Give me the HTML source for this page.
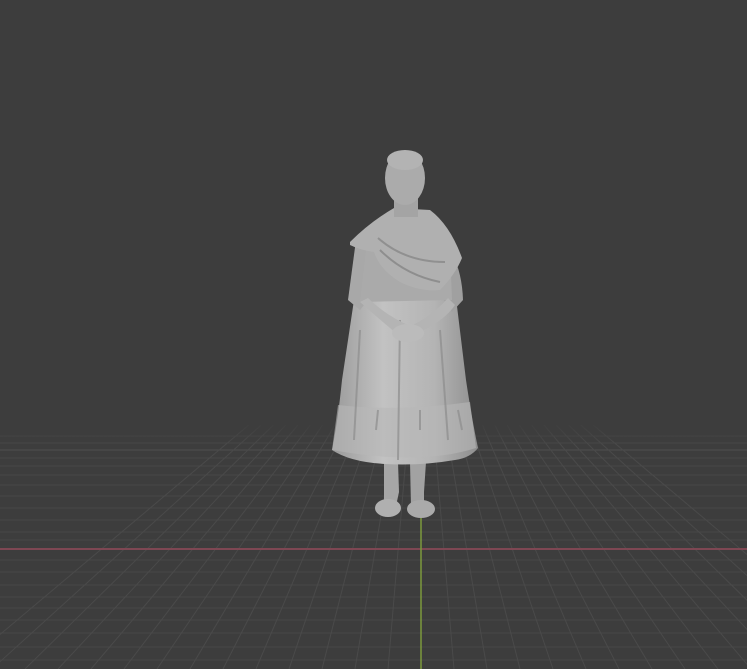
<!DOCTYPE html>
<html><head><meta charset="utf-8"><style>
html,body{margin:0;padding:0;background:#3d3d3d;width:747px;height:669px;overflow:hidden}
</style></head><body>
<svg width="747" height="669" viewBox="0 0 747 669" xmlns="http://www.w3.org/2000/svg">
<defs>
<linearGradient id="sk" x1="0" x2="1" y1="0" y2="0">
<stop offset="0" stop-color="#9a9a9a"/><stop offset="0.35" stop-color="#c2c2c2"/><stop offset="0.7" stop-color="#b4b4b4"/><stop offset="1" stop-color="#8e8e8e"/>
</linearGradient>
<linearGradient id="fade" x1="0" x2="0" y1="0" y2="1">
<stop offset="0" stop-color="#3d3d3d" stop-opacity="1"/><stop offset="1" stop-color="#3d3d3d" stop-opacity="0"/>
</linearGradient>
</defs>
<rect width="747" height="669" fill="#3d3d3d"/>
<g stroke="#484848" stroke-width="1" fill="none" id="grid">
<line x1="0" y1="450" x2="747" y2="450" stroke="#4f4f4f"/>
<line x1="0" y1="436" x2="747" y2="436"/>
<line x1="0" y1="443" x2="747" y2="443"/>
<line x1="0" y1="458" x2="747" y2="458"/>
<line x1="0" y1="466" x2="747" y2="466"/>
<line x1="0" y1="475" x2="747" y2="475"/>
<line x1="0" y1="485" x2="747" y2="485"/>
<line x1="0" y1="496" x2="747" y2="496"/>
<line x1="0" y1="508" x2="747" y2="508"/>
<line x1="0" y1="520" x2="747" y2="520"/>
<line x1="0" y1="532" x2="747" y2="532"/>
<line x1="0" y1="540" x2="747" y2="540"/>
<line x1="0" y1="560" x2="747" y2="560"/>
<line x1="0" y1="572" x2="747" y2="572"/>
<line x1="0" y1="585" x2="747" y2="585"/>
<line x1="0" y1="597" x2="747" y2="597"/>
<line x1="0" y1="608" x2="747" y2="608"/>
<line x1="0" y1="620" x2="747" y2="620"/>
<line x1="0" y1="633" x2="747" y2="633"/>
<line x1="0" y1="647" x2="747" y2="647"/>
<line x1="0" y1="660" x2="747" y2="660"/>
</g>
<g stroke="#4a4a4a" stroke-width="1" id="vlines"></g>
<rect x="0" y="420" width="747" height="25" fill="url(#fade)"/>
<line x1="0" y1="549" x2="747" y2="549" stroke="#7e4753" stroke-width="2"/>
<line x1="421" y1="518" x2="421" y2="669" stroke="#7c9a3c" stroke-width="1.5"/>
<g>
<path d="M384 462 L398 462 L399 492 L396 506 L384 506 Z" fill="#a6a6a6"/>
<path d="M410 462 L426 462 L424 492 L424 506 L411 506 Z" fill="#a2a2a2"/>
<ellipse cx="388" cy="508" rx="13" ry="9" fill="#b0b0b0"/>
<ellipse cx="421" cy="509" rx="14" ry="9" fill="#aaaaaa"/>
<path d="M354 300 Q405 290 456 298 L466 380 Q472 420 478 448 Q470 458 455 460 Q420 466 385 464 Q350 462 332 450 Q338 420 342 380 Z" fill="url(#sk)"/>
<path d="M338 405 Q400 412 470 402 L476 448 Q420 466 332 450 Z" fill="#b8b8b8" opacity="0.6"/>
<g stroke="#8d8d8d" stroke-width="2" fill="none" opacity="0.7">
<path d="M360 330 L354 440"/><path d="M400 320 L398 460"/><path d="M440 330 L448 440"/><path d="M378 410 L376 430"/><path d="M420 410 L420 430"/><path d="M458 410 L462 430"/>
</g>
<path d="M356 240 Q352 270 348 300 L360 310 L368 300 L372 255 Z" fill="#a8a8a8"/>
<path d="M450 250 Q462 270 463 300 L452 312 L444 300 Z" fill="#a0a0a0"/>
<path d="M366 250 L450 250 L452 300 L360 302 Z" fill="#aaaaaa"/>
<path d="M360 302 Q380 320 402 338 L420 332 Q445 320 455 305 L448 298 Q430 318 410 326 Q385 315 368 298 Z" fill="#b4b4b4"/>
<ellipse cx="408" cy="333" rx="16" ry="9" fill="#bbbbbb"/>
<path d="M350 242 Q370 222 394 208 L430 210 Q450 225 462 258 Q455 275 440 290 Q420 292 400 282 Q380 270 374 252 Q360 250 350 245 Z" fill="#b0b0b0"/>
<path d="M380 250 Q405 275 440 282" stroke="#8e8e8e" stroke-width="2" fill="none"/>
<path d="M378 238 Q405 262 445 262" stroke="#909090" stroke-width="2" fill="none"/>
<rect x="394" y="195" width="24" height="22" fill="#a4a4a4"/>
<ellipse cx="405" cy="178" rx="20" ry="27" fill="#ababab"/>
<ellipse cx="405" cy="160" rx="18" ry="10" fill="#b3b3b3"/>
</g>
<script>
var g=document.getElementById('vlines');
for(var i=-14;i<=14;i++){var x2=421+i*33;var t=(425-280)/(669-280);var x1=421+i*33*t;
var l=document.createElementNS('http://www.w3.org/2000/svg','line');
l.setAttribute('x1',x1);l.setAttribute('y1',425);l.setAttribute('x2',x2);l.setAttribute('y2',669);g.appendChild(l);}
</script>
</svg>
</body></html>
